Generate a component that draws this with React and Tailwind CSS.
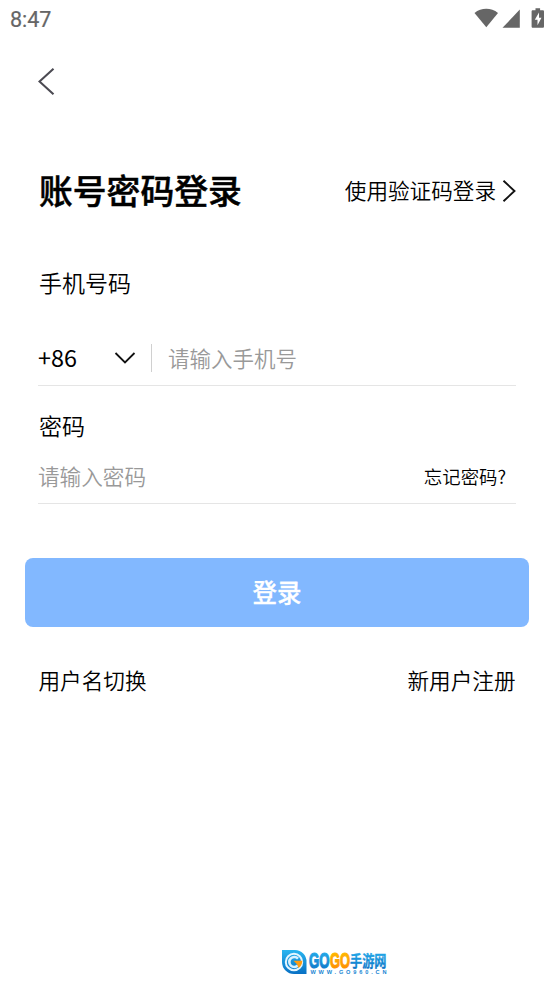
import { useState } from "react";

function StatusBar() {
    return (
        <div className="h-[38px] flex items-center justify-between pl-[9px] pr-[9px] text-[#666666]">
            <span className="pt-px pl-px font-['Roboto',sans-serif] font-normal text-[21.5px] leading-[38px] [-webkit-text-stroke:0.2px_#666666]">8:47</span>
            <svg width="71" height="38" viewBox="0 0 71 38" fill="#666666">
                <path d="M0.5 13C7.4 7.4 17.1 7.4 24 13L12.3 27.2Z" />
                <path d="M45.8 9.6V27.8H28.5Z" />
                <path d="M61.5 8.2h4.6v2h2.6c.8 0 1.3.5 1.3 1.3v15c0 .8-.5 1.3-1.3 1.3h-9.8c-.8 0-1.3-.5-1.3-1.3v-15c0-.8.5-1.3 1.3-1.3h2.6z" />
                <path d="M65 12.5l-4.2 7.3h2.7v5.4l4-7.4h-2.5z" fill="#fff" />
            </svg>
        </div>
    );
}

function SiteLogo() {
    return (
        <svg width="108" height="28" viewBox="0 0 108 28">
            <defs>
                <linearGradient id="blue" x1="0" y1="0" x2="0" y2="1">
                    <stop offset="0" stopColor="#29b5f0" />
                    <stop offset="1" stopColor="#0870c4" />
                </linearGradient>
                <linearGradient id="orange" x1="0" y1="0" x2="0" y2="1">
                    <stop offset="0" stopColor="#ffc400" />
                    <stop offset="1" stopColor="#ff8400" />
                </linearGradient>
            </defs>
            <path d="M1 1H14A11.7 11.7 0 0 1 25.5 13V25H13A12 12 0 0 1 1 13Z" fill="url(#blue)" />
            <circle cx="13" cy="13" r="8.2" fill="none" stroke="#e4f6ff" strokeWidth="2" />
            <path d="M17 9.6A5 5 0 1 0 17 16.4" fill="none" stroke="#d8f1ff" strokeWidth="2.6" />
            <path d="M12.5 11.8H21.4C21.2 15.2 19.8 17.4 17.5 19L16 15.3Z" fill="#ff9d14" />
            <g fontFamily="'Liberation Sans', sans-serif" fontWeight="700" fontSize="22">
                <text x="28" y="18.8" textLength="20.5" lengthAdjust="spacingAndGlyphs" fill="url(#blue)" stroke="url(#blue)" strokeWidth="1.2">GO</text>
                <text x="49" y="18.8" textLength="20" lengthAdjust="spacingAndGlyphs" fill="url(#orange)" stroke="url(#orange)" strokeWidth="1.2">GO</text>
            </g>
            <text x="69" y="17.6" textLength="36.5" lengthAdjust="spacingAndGlyphs" fontFamily="'Noto Sans CJK SC', sans-serif" fontWeight="700" fontSize="15.5" fill="url(#blue)" stroke="url(#blue)" strokeWidth="0.3">手游网</text>
            <text x="29.5" y="25.4" textLength="76" fontFamily="'Liberation Sans', sans-serif" fontWeight="700" fontSize="5.6" fill="#1685d2">WWW.GO960.CN</text>
        </svg>
    );
}

export default function App() {
    const [phone, setPhone] = useState("");
    const [password, setPassword] = useState("");

    return (
        <div className="h-[985px] w-[554px] flex flex-col bg-white text-black font-[350] font-['Noto_Sans_CJK_SC',sans-serif]">
            <StatusBar />

            <div className="pl-[38px] pr-[38px]">
                <button className="block mt-[30px]">
                    <svg width="17" height="28" viewBox="0 0 17 28" fill="none" stroke="#4b4a52" strokeWidth="2.1">
                        <path d="M15.5 0.8L1.5 13.5L15.5 26.2" />
                    </svg>
                </button>

                {/* Title and switch to code login */}
                <div className="mt-[70px] h-[50px] flex items-center justify-between">
                    <h1 className="pl-px pb-0.5 text-[33.8px] leading-[48px] font-medium [-webkit-text-stroke:0.5px_#000]">账号密码登录</h1>
                    <button className="flex items-center text-[21.6px]">
                        <span className="pb-0.5">使用验证码登录</span>
                        <svg className="ml-1.5" width="14" height="24" viewBox="0 0 14 24" fill="none" stroke="#111" strokeWidth="1.9">
                            <path d="M1.5 1.8L12.5 12L1.5 22.2" />
                        </svg>
                    </button>
                </div>

                <label className="block mt-12 h-9 pl-px text-[23px] leading-9">手机号码</label>
                <div className="mt-[31px] h-[55px] flex items-center border-b border-[#e5e5e5]">
                    <button className="w-[98px] flex items-center justify-between text-[23.4px]">
                        <span className="font-normal">+86</span>
                        <svg width="22" height="14" viewBox="0 0 22 14" fill="none" stroke="#111" strokeWidth="1.8">
                            <path d="M1.5 2L11 11.5L20.5 2" />
                        </svg>
                    </button>
                    <div className="ml-[15px] w-px h-7 bg-[#d0d0d0]" />
                    <input
                        className="ml-4 w-[300px] text-[21.5px] outline-none placeholder:text-[#999999]"
                        placeholder="请输入手机号"
                        value={phone}
                        onChange={(e) => setPhone(e.target.value)}
                    />
                </div>

                <label className="block mt-[21px] h-9 pl-px text-[23px] leading-9">密码</label>
                <div className="mt-[7px] h-[54px] flex items-center justify-between border-b border-[#e5e5e5]">
                    <input
                        className="w-[300px] text-[21.6px] outline-none placeholder:text-[#999999]"
                        type="password"
                        placeholder="请输入密码"
                        value={password}
                        onChange={(e) => setPassword(e.target.value)}
                    />
                    <button className="mr-[10px] text-[18.4px]">忘记密码?</button>
                </div>
            </div>

            <button className="mt-[54px] ml-[25px] w-[504px] h-[69px] rounded-lg bg-[#82b8ff] text-white text-[24.5px] font-medium [-webkit-text-stroke:0.3px_#fff]">
                登录
            </button>

            <div className="mt-[33px] pl-[38.5px] pr-[38.5px] h-10 flex items-center justify-between text-[21.6px]">
                <button>用户名切换</button>
                <button>新用户注册</button>
            </div>

            <div className="mt-auto mb-2 pl-[281px]">
                <SiteLogo />
            </div>
        </div>
    );
}
